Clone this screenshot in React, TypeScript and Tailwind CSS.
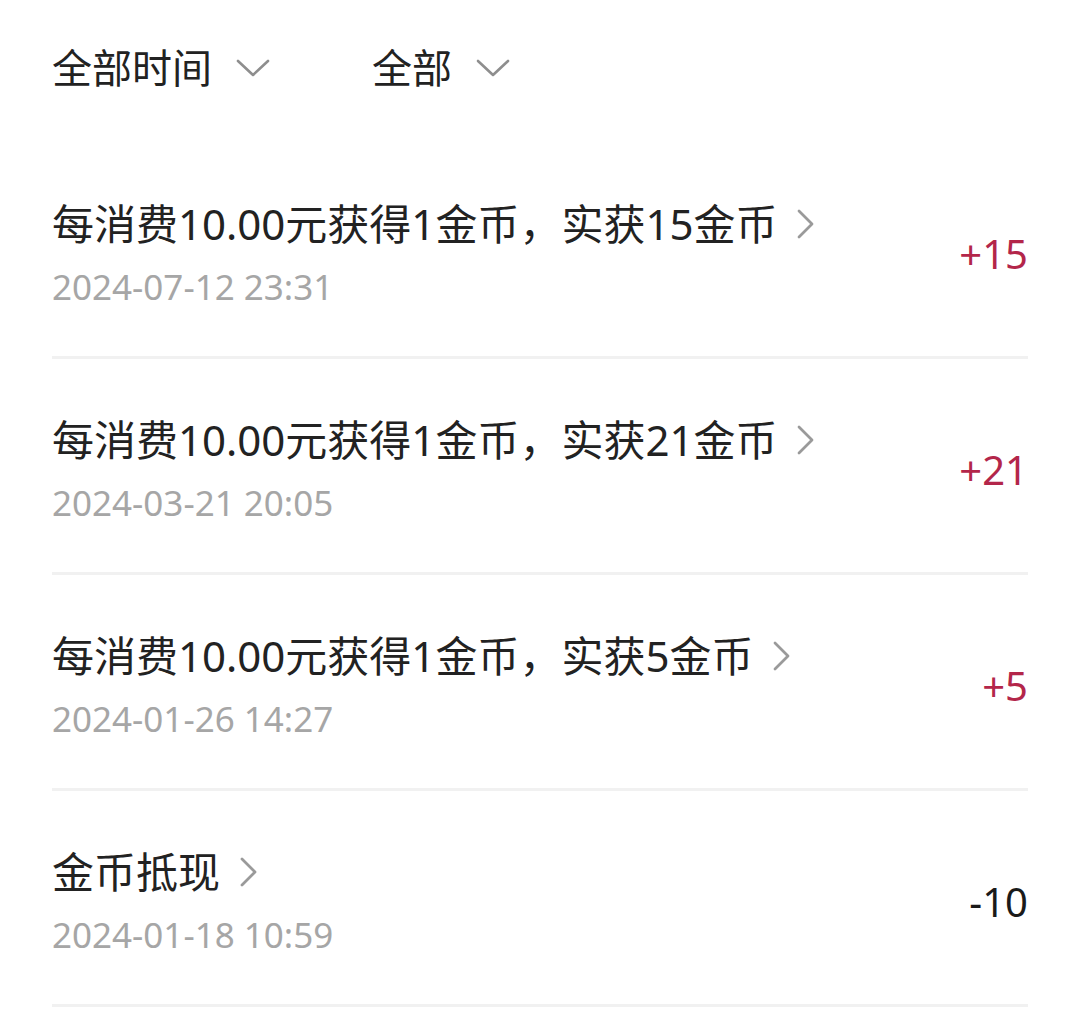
import { ReactNode } from 'react';

interface Record {
  title: string;
  time: string;
  amount: string;
  positive: boolean;
}

const records: Record[] = [
  { title: '每消费10.00元获得1金币，实获15金币', time: '2024-07-12 23:31', amount: '+15', positive: true },
  { title: '每消费10.00元获得1金币，实获21金币', time: '2024-03-21 20:05', amount: '+21', positive: true },
  { title: '每消费10.00元获得1金币，实获5金币', time: '2024-01-26 14:27', amount: '+5', positive: true },
  { title: '金币抵现', time: '2024-01-18 10:59', amount: '-10', positive: false },
];

function ChevronDown() {
  return (
    <svg width="34" height="20" viewBox="0 0 34 20" fill="none" className="shrink-0">
      <path d="M2 3 L17 17 L32 3" stroke="#8e8e8e" strokeWidth="2.6" strokeLinecap="round" strokeLinejoin="round" />
    </svg>
  );
}

function ChevronRight() {
  return (
    <svg width="18" height="30" viewBox="0 0 18 30" fill="none" className="shrink-0">
      <path d="M3 2 L16 15 L3 28" stroke="#9a9a9a" strokeWidth="2.8" strokeLinecap="round" strokeLinejoin="round" />
    </svg>
  );
}

function Filter({ children }: { children: ReactNode }) {
  return (
    <button className="flex items-center gap-[24px] text-[40px] leading-[48px] text-[#222]">
      <span>{children}</span>
      <ChevronDown />
    </button>
  );
}

export default function App() {
  return (
    <div
      className="w-[1080px] h-[1034px] bg-white overflow-hidden px-[52px]"
      style={{ fontFamily: '"Noto Sans", "Noto Sans CJK SC", sans-serif' }}
    >
      <div className="h-[143px] flex items-start pt-[44px] gap-[102px]">
        <Filter>全部时间</Filter>
        <Filter>全部</Filter>
      </div>
      {records.map((r) => (
        <div
          key={r.time}
          className="h-[216px] pt-[8px] flex items-center justify-between border-b-[3px] border-[#f1f1f1]"
        >
          <div className="flex flex-col gap-[19px]">
            <div className="flex items-center gap-[19px] text-[42px] leading-[48px] text-[#222]">
              <span>{r.title}</span>
              <ChevronRight />
            </div>
            <div className="text-[35px] leading-[40px] text-[#a6a6a6]">{r.time}</div>
          </div>
          <div
            className={
              r.positive
                ? 'text-[40px] leading-[48px] text-[#b3264a]'
                : 'text-[40px] leading-[48px] text-[#1a1a1a]'
            }
          >
            {r.amount}
          </div>
        </div>
      ))}
    </div>
  );
}
